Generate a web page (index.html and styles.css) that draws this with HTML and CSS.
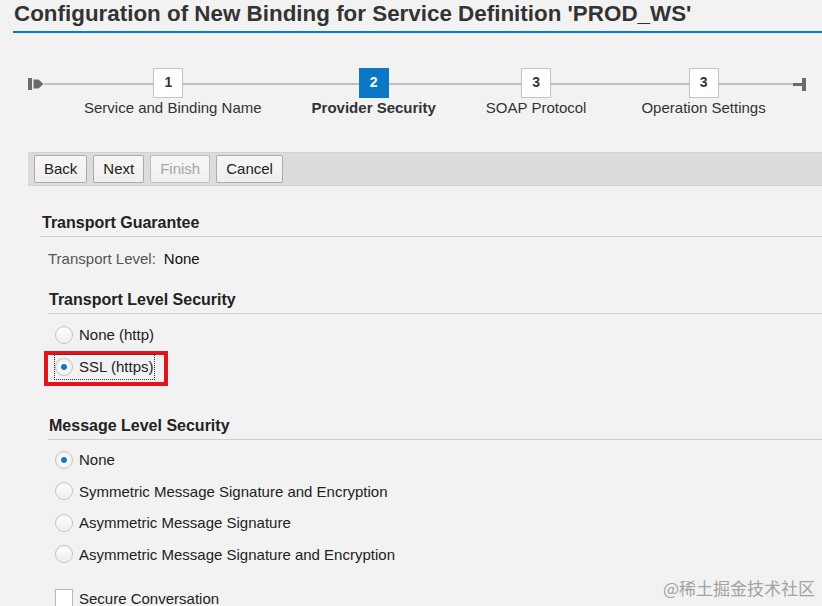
FILE: index.html
```html
<!DOCTYPE html>
<html lang="en">
<head>
<meta charset="utf-8">
<title>Configuration of New Binding</title>
<link rel="stylesheet" href="styles.css">
</head>
<body>
<div class="page">
  <header class="title-bar">
    <h1 class="title">Configuration of New Binding for Service Definition 'PROD_WS'</h1>
  </header>

  <div class="stepper">
    <svg class="track-start" width="16" height="12" viewBox="0 0 16 12" aria-hidden="true">
      <rect x="0" y="0" width="4" height="12" fill="#6a6a6a"/>
      <polygon points="5.5,1.5 10.5,1.5 15.5,6 10.5,10.5 5.5,10.5" fill="#6a6a6a"/>
    </svg>
    <ol class="steps">
      <li class="step step--first"><span class="step-num">1</span><span class="step-label">Service and Binding Name</span></li>
      <li class="step step--active"><span class="step-num">2</span><span class="step-label">Provider Security</span></li>
      <li class="step"><span class="step-num">3</span><span class="step-label">SOAP Protocol</span></li>
      <li class="step step--last"><span class="step-num">3</span><span class="step-label">Operation Settings</span></li>
    </ol>
    <svg class="track-end" width="13" height="13" viewBox="0 0 13 13" aria-hidden="true">
      <rect x="0" y="5" width="9" height="3" fill="#6a6a6a"/>
      <rect x="9" y="0" width="4" height="13" fill="#6a6a6a"/>
    </svg>
  </div>

  <div class="toolbar">
    <button class="btn" type="button">Back</button>
    <button class="btn" type="button">Next</button>
    <button class="btn btn--disabled" type="button">Finish</button>
    <button class="btn" type="button">Cancel</button>
  </div>

  <section class="group">
    <h2 class="group-title">Transport Guarantee</h2>
    <div class="field">
      <span class="field-label">Transport Level:</span>
      <span class="field-value">None</span>
    </div>

    <div class="sub">
      <h3 class="sub-title">Transport Level Security</h3>
      <div class="options options--transport">
        <div class="option"><span class="opt-inner"><span class="radio"></span><span class="opt-text">None (http)</span></span></div>
        <div class="option option--highlight"><span class="opt-inner opt-inner--focus"><span class="radio radio--on"></span><span class="opt-text">SSL (https)</span></span></div>
      </div>
    </div>

    <div class="sub sub--message">
      <h3 class="sub-title">Message Level Security</h3>
      <div class="options options--message">
        <div class="option"><span class="opt-inner"><span class="radio radio--on"></span><span class="opt-text">None</span></span></div>
        <div class="option"><span class="opt-inner"><span class="radio"></span><span class="opt-text">Symmetric Message Signature and Encryption</span></span></div>
        <div class="option"><span class="opt-inner"><span class="radio"></span><span class="opt-text">Asymmetric Message Signature</span></span></div>
        <div class="option"><span class="opt-inner"><span class="radio"></span><span class="opt-text">Asymmetric Message Signature and Encryption</span></span></div>
      </div>
      <div class="option option--check"><span class="opt-inner"><span class="checkbox"></span><span class="opt-text">Secure Conversation</span></span></div>
    </div>
  </section>

  <div class="watermark">@稀土掘金技术社区</div>
</div>
</body>
</html>
```

FILE: styles.css
```css
html, body {
  margin: 0;
  padding: 0;
  background: #f2f2f2;
}

.page {
  position: relative;
  height: 606px;
  overflow: hidden;
  font-family: "Liberation Sans", Arial, sans-serif;
  color: #333;
  background: #f2f2f2;
}

/* Title */
.title-bar {
  margin-left: 13px;
  height: 31px;
  border-bottom: 2px solid #0a7cc2;
  padding-left: 1px;
}

.title {
  margin: 0;
  font-size: 22.4px;
  line-height: 27px;
  font-weight: bold;
  color: #333;
  white-space: nowrap;
}

/* Stepper */
.stepper {
  position: relative;
  display: flex;
  align-items: flex-start;
  margin-top: 35px;
  padding: 0 16px 0 28px;
}

.stepper::before {
  content: "";
  position: absolute;
  left: 44px;
  right: 29px;
  top: 15px;
  height: 2px;
  background: #bfbfbf;
}

.track-start {
  position: relative;
  margin-top: 10px;
  flex: none;
}

.track-end {
  position: relative;
  margin-top: 10px;
  margin-left: auto;
  flex: none;
}

.steps {
  position: relative;
  display: flex;
  gap: 50px;
  margin: 0 0 0 40px;
  padding: 0;
  list-style: none;
}

.step {
  display: flex;
  flex-direction: column;
  align-items: center;
}

.step--last {
  margin-left: 5px;
}

.step-num {
  box-sizing: border-box;
  width: 30px;
  height: 30px;
  border: 1px solid #c4c4c4;
  background: #fff;
  font-size: 14px;
  font-weight: bold;
  line-height: 26px;
  text-align: center;
  color: #333;
}

.step--first .step-num {
  margin-right: 9px;
}

.step--active .step-num {
  background: #0a78c2;
  border-color: #0a78c2;
  color: #fff;
}

.step-label {
  margin-top: 1px;
  font-size: 15px;
  line-height: 18px;
  color: #333;
  white-space: nowrap;
}

.step--active .step-label {
  font-weight: bold;
  color: #333;
}

/* Toolbar */
.toolbar {
  display: flex;
  gap: 6px;
  margin: 35px 0 0 28px;
  padding: 2px 6px;
  background: #dcdcdc;
  border-top: 1px solid #d2d2d2;
  border-bottom: 1px solid #d2d2d2;
}

.btn {
  box-sizing: border-box;
  height: 28px;
  padding: 0 9px;
  font-family: "Liberation Sans", Arial, sans-serif;
  font-size: 15px;
  line-height: 26px;
  color: #222;
  background: linear-gradient(#f7f7f7, #efefef);
  border: 1px solid #ababab;
  border-radius: 2px;
}

.btn--disabled {
  color: #a6a6a6;
  border-color: #bdbdbd;
}

/* Groups */
.group {
  margin: 27px 0 0 40px;
}

.group-title {
  margin: 0;
  padding: 0 0 3px 2px;
  font-size: 16px;
  line-height: 20px;
  font-weight: bold;
  color: #222;
  border-bottom: 1px solid #cfcfcf;
}

.field {
  display: flex;
  gap: 8px;
  margin-top: 13px;
  padding-left: 8px;
  font-size: 15px;
  line-height: 18px;
}

.field-label {
  color: #555;
}

.field-value {
  color: #111;
}

.sub {
  margin: 22px 0 0 8px;
}

.sub--message {
  margin-top: 34px;
}

.sub-title {
  margin: 0;
  padding: 0 0 3px 1px;
  font-size: 16px;
  line-height: 20px;
  font-weight: bold;
  color: #222;
  border-bottom: 1px solid #cfcfcf;
}

.options--transport {
  margin-top: 5px;
}

.options--message {
  margin-top: 4px;
}

.option {
  box-sizing: border-box;
  display: flex;
  align-items: center;
  width: fit-content;
  height: 31.5px;
  margin-left: -4px;
  padding: 0 10px 0 7px;
  border: 4px solid transparent;
}

.option--highlight {
  border-color: #e2131d;
  height: 35px;
  margin: 0 0 -3.5px -4px;
  padding-left: 7px;
  padding-bottom: 3px;
}

.option--check {
  margin-top: 12px;
  height: 32px;
}

.opt-inner {
  display: flex;
  align-items: center;
  gap: 6px;
  height: 24px;
  font-size: 15px;
  color: #222;
}

.opt-inner--focus {
  outline: 1px dotted #333;
  outline-offset: 0;
  padding-right: 1px;
}

.radio {
  box-sizing: border-box;
  flex: none;
  width: 18px;
  height: 18px;
  border-radius: 50%;
  border: 1px solid #c2c2c2;
  background: linear-gradient(#ffffff, #ededed);
  box-shadow: inset 0 0 0 1px #f7f7f7;
}

.radio--on {
  background: radial-gradient(circle, #1679c4 0, #1679c4 2.6px, #ffffff 3.4px, #f4f4f4 6px, #e6e6e6 8.5px);
}

.checkbox {
  box-sizing: border-box;
  flex: none;
  width: 18px;
  height: 18px;
  border: 1px solid #b9b9b9;
  background: #fff;
}

.watermark {
  position: absolute;
  right: 7px;
  top: 578px;
  font-family: "Noto Sans CJK SC", sans-serif;
  font-size: 17px;
  line-height: 20px;
  color: #a3a3a3;
  white-space: nowrap;
}
```
